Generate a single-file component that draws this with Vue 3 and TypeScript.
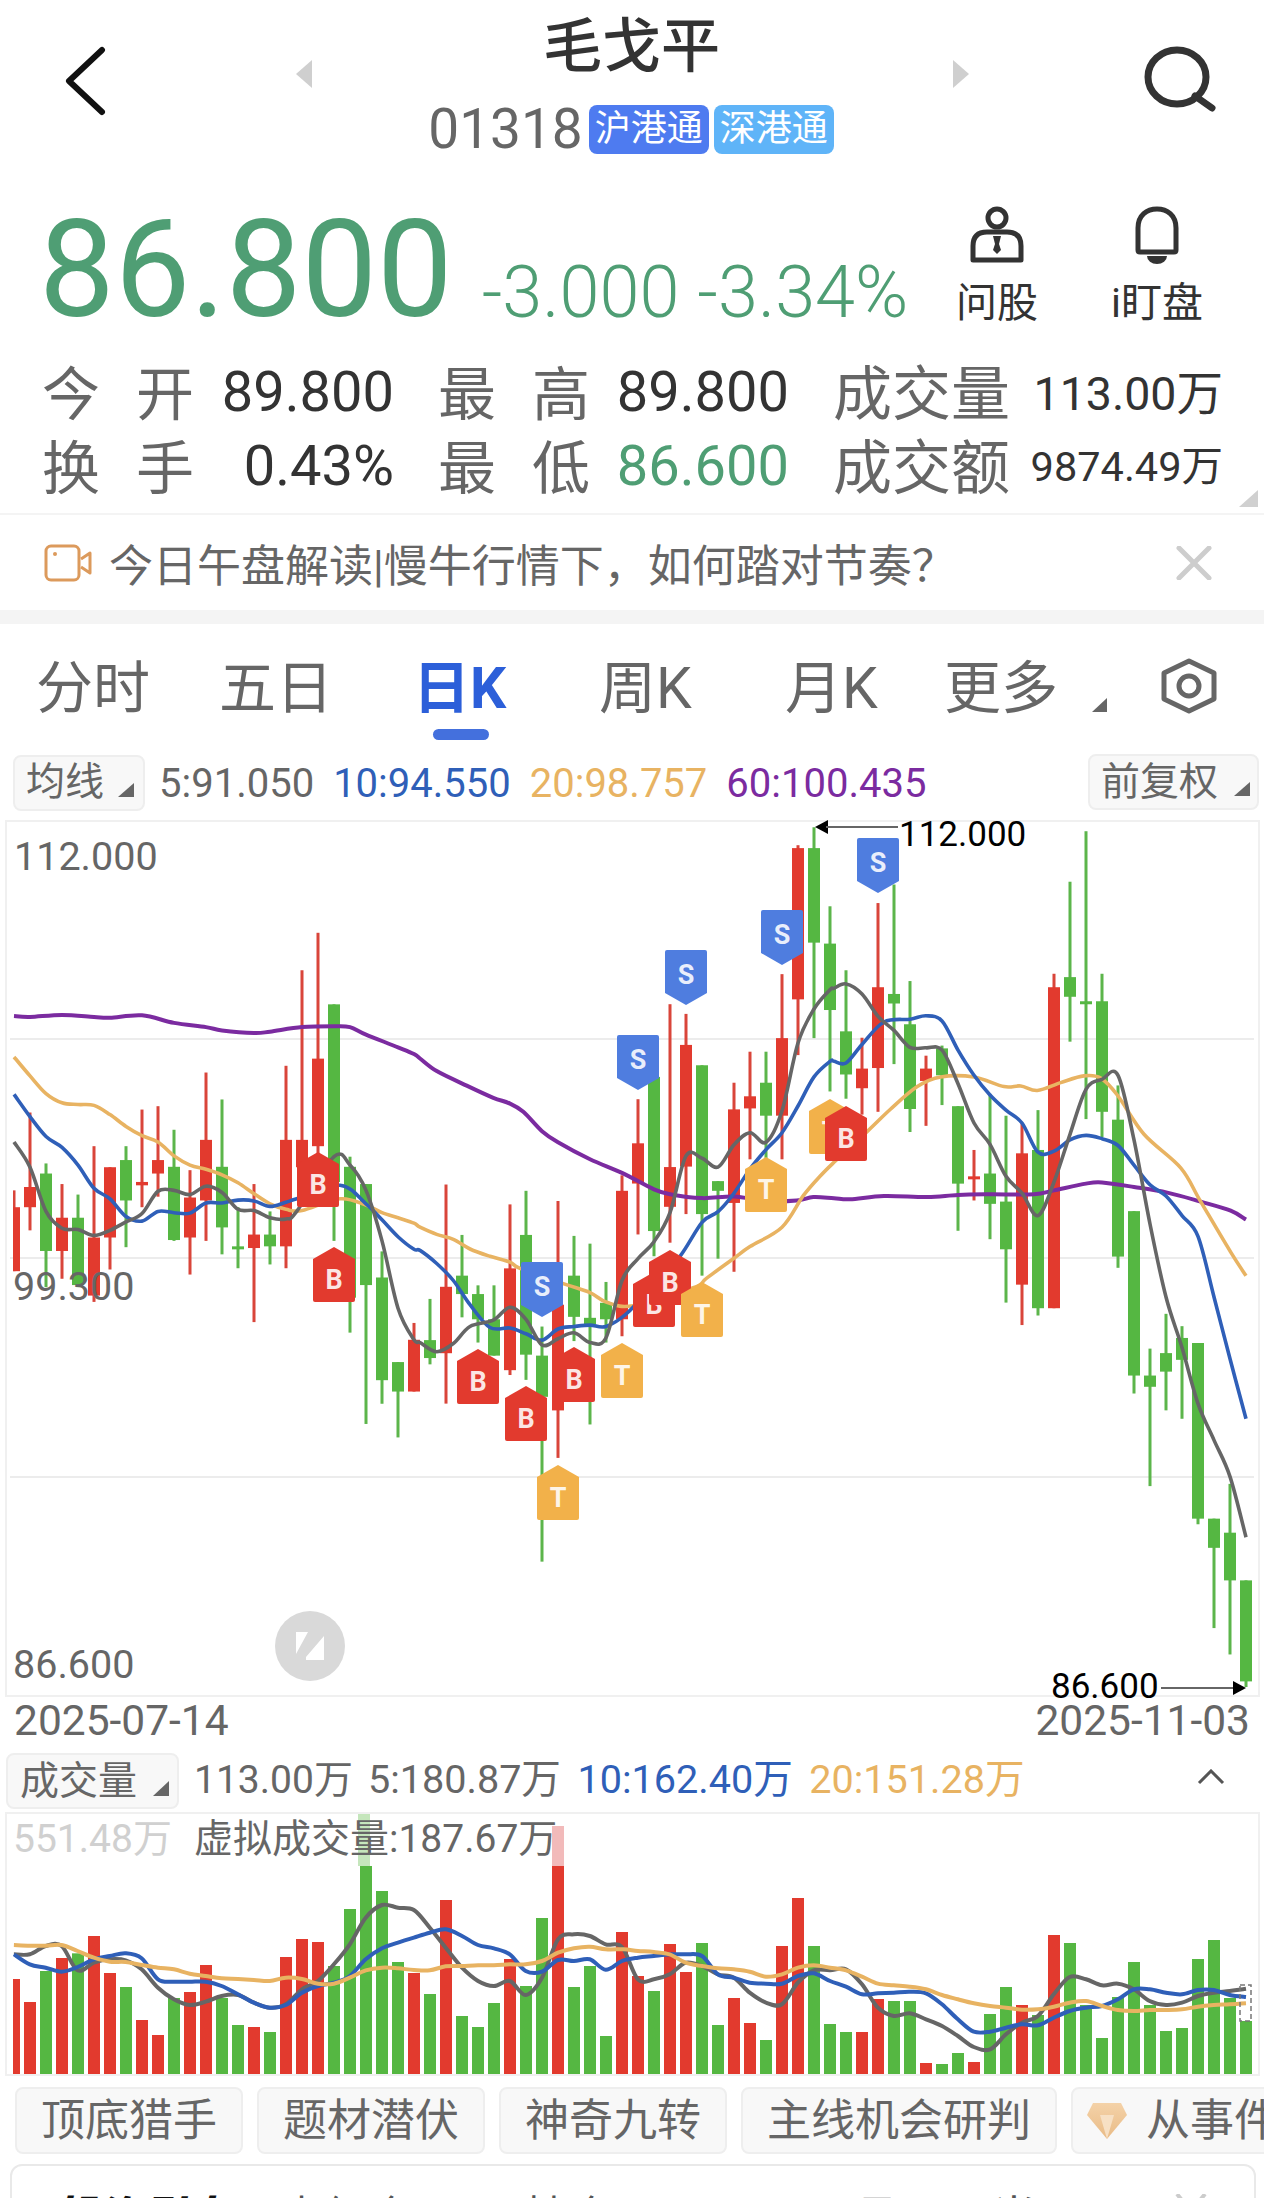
<script setup lang="ts">
type Candle = [number, number, number, number, number]
type P = [number, number]

// hi, body top, body bottom, lo, 1 = green
const rawA: number[][] = [
  [880,920,1072,1072,0],[695,872,920,975,0],[816,840,1024,1110,1],[865,945,1024,1090,0],[890,945,1105,1110,1],
  [775,992,1130,1145,0],[825,825,992,1068,0],[775,808,904,1015,1],[688,860,868,920,0],[680,808,840,895,0],
  [736,824,998,1000,1],[832,897,992,1080,0],[600,760,904,1000,0],[664,824,968,1032,1],[920,1013,1017,1065,1],
  [865,985,1017,1193,0],[930,985,1013,1056,1],[584,760,1013,1065,0],[357,760,825,900,0],[268,567,775,800,0],
  [438,438,860,1000,1],[800,824,1135,1218,1],[865,865,1105,1435,1],[1025,1087,1331,1387,1],[1288,1288,1358,1467,1],
  [1195,1235,1358,1358,0],
]
const rawB: number[][] = [
  [988,1073,1110,1123,1],[752,963,1100,1204,0],[856,940,978,1026,1],[960,978,1030,1078,1],[960,1030,1105,1105,1],
  [793,925,1135,1145,0],[765,856,1103,1155,1],[1045,1105,1190,1530,1],[786,1000,1218,1316,0],[858,940,1025,1075,1],
  [874,1027,1040,1247,1],[953,996,1030,1078,1],[733,765,1030,1065,0],[576,667,750,855,0],[530,530,848,900,1],
  [380,716,798,872,0],[400,464,715,813,0],[506,506,813,940,1],[745,745,765,905,1],[542,597,790,932,0],
  [478,570,595,700,0],[478,542,610,700,1],[318,450,610,700,0],[52,58,370,485,0],[15,58,253,450,1],
  [178,255,392,560,1],[310,436,525,575,1],
]
const rawC: number[][] = [
  [388,443,478,525,0],[148,298,442,520,0],[115,310,327,435,1],[287,364,515,556,1],[420,443,465,545,0],
  [402,407,455,508,1],[510,510,648,732,1],[588,635,640,678,0],[488,630,684,747,1],[527,680,765,860,1],
  [540,594,828,900,0],[517,588,870,883,1],[274,298,870,870,0],[110,280,315,395,1],[20,323,327,533,1],
  [274,323,520,565,1],[473,534,778,798,1],[697,697,990,1022,1],[942,990,1010,1187,1],[880,950,983,1052,1],
  [902,923,962,1067,1],[932,932,1245,1255,1],[1245,1245,1297,1440,1],[1183,1270,1355,1487,1],[1355,1355,1535,1545,1],
]
const sA = 2.376, sB = 2.063, sC = 1.782
const conv = (rows: number[][], s: number): Candle[] =>
  rows.map((r) => [820 + r[0] / s, 820 + r[1] / s, 820 + r[2] / s, 820 + r[3] / s, r[4]] as Candle)
const candles = [...conv(rawA, sA), ...conv(rawB, sB), ...conv(rawC, sC)].map((c, i) => ({
  x: 14 + 16 * i,
  hi: c[0],
  top: c[1],
  h: Math.max(c[2] - c[1], 3),
  lo: c[3],
  color: c[4] ? '#55b742' : '#e23a2e',
  wick: c[4] ? '#5cb54b' : '#d9453a',
}))

function smooth(pts: P[]): string {
  let d = `M${pts[0][0].toFixed(1)} ${pts[0][1].toFixed(1)}`
  for (let i = 0; i < pts.length - 1; i++) {
    const p0 = pts[Math.max(i - 1, 0)]
    const p1 = pts[i]
    const p2 = pts[i + 1]
    const p3 = pts[Math.min(i + 2, pts.length - 1)]
    const c1x = p1[0] + (p2[0] - p0[0]) / 6
    const c1y = p1[1] + (p2[1] - p0[1]) / 6
    const c2x = p2[0] - (p3[0] - p1[0]) / 6
    const c2y = p2[1] - (p3[1] - p1[1]) / 6
    d += `C${c1x.toFixed(1)} ${c1y.toFixed(1)} ${c2x.toFixed(1)} ${c2y.toFixed(1)} ${p2[0].toFixed(1)} ${p2[1].toFixed(1)}`
  }
  return d
}

function priceLine(a: number[], b: number[], c: number[]): string {
  const out: P[] = []
  for (let i = 0; i < a.length; i += 2) if (a[i] / 3 < 420) out.push([a[i] / 3, 820 + a[i + 1] / sA])
  for (let i = 0; i < b.length; i += 2) {
    const x = 420 + b[i] / 3
    if (x >= 420 && x < 834) out.push([x, 820 + b[i + 1] / sB])
  }
  for (let i = 0; i < c.length; i += 2) out.push([834 + c[i] / 3, 820 + c[i + 1] / sC])
  return smooth(out)
}

const ma60 = priceLine(
  [42,466,90,468,186,463,282,468,330,470,426,464,522,482,618,492,666,500,762,506,810,503,906,492,1002,490,1050,492,1098,510,1194,540,1242,556],
  [0,492,50,518,140,548,220,573,270,585,310,602,366,642,414,665,510,700,606,728,702,762,750,772,846,780,942,777,1038,786,1130,785,1180,778],
  [0,674,48,676,150,670,280,672,372,668,468,667,600,667,660,660,756,648,804,646,900,654,1000,664,1100,680,1190,696,1236,712],
)
const ma10 = priceLine(
  [42,652,90,705,138,752,186,778,234,820,282,875,330,900,378,942,426,953,474,930,522,933,570,934,618,910,666,910,714,903,762,905,810,918,858,908,890,900,1020,868,1098,912,1146,950,1194,990,1242,1020],
  [0,888,50,915,100,950,150,1000,210,1047,270,1048,318,1060,366,1073,414,1050,462,1045,510,1042,558,1045,620,1018,700,960,780,900,846,830,894,808,942,770,990,720,1038,680,1086,645,1134,590,1182,530,1230,498],
  [0,430,36,433,84,400,150,360,228,355,276,349,324,358,372,410,420,455,468,490,516,517,564,540,612,592,660,590,708,570,756,562,804,568,852,580,900,615,948,650,996,670,1044,705,1092,742,1140,850,1188,960,1236,1067],
)
const ma20 = priceLine(
  [42,563,90,608,138,650,186,672,234,676,282,678,330,700,378,728,426,750,474,765,522,798,570,820,618,830,666,843,714,862,762,888,810,912,858,925,906,928,1020,900,1098,915,1146,933,1194,945,1242,958],
  [0,840,50,855,100,865,150,885,210,900,270,912,300,925,432,957,510,975,560,995,640,1002,820,965,860,945,940,905,990,880,1086,840,1150,775,1200,735],
  [0,610,100,555,170,515,250,475,320,458,420,458,510,475,560,474,610,482,680,468,750,456,800,460,850,490,930,560,1040,620,1100,680,1190,770,1236,812],
)
const ma5 = priceLine(
  [42,765,90,825,138,930,186,970,234,973,282,987,330,975,378,955,426,935,474,882,522,880,570,890,618,870,666,885,714,925,762,928,810,945,858,948,890,930,1002,800,1050,820,1098,880,1146,1000,1194,1160,1242,1235],
  [0,1078,50,1097,100,1080,150,1045,220,1032,270,1005,318,1030,366,1083,414,1070,462,1058,510,1078,558,1068,606,950,654,905,702,870,750,810,798,693,846,698,894,716,942,670,990,645,1038,665,1086,600,1134,460,1182,390,1230,350],
  [0,300,36,292,84,310,132,350,180,375,228,405,276,406,324,410,372,470,420,540,468,578,516,635,564,665,612,705,660,645,708,560,756,480,804,462,852,455,900,570,948,720,996,850,1044,940,1092,1040,1140,1105,1188,1170,1236,1278],
)
const priceLines = [
  { d: ma60, c: '#7b2ba0', w: 4 },
  { d: ma20, c: '#e8b362', w: 3.6 },
  { d: ma10, c: '#2f5fb8', w: 3.6 },
  { d: ma5, c: '#666666', w: 3.6 },
]

const markers = [
  { k: 'T', x: 830, y: 1099 }, { k: 'B', x: 846, y: 1106 },
  { k: 'B', x: 318, y: 1152 }, { k: 'B', x: 334, y: 1247 },
  { k: 'B', x: 478, y: 1349 }, { k: 'B', x: 526, y: 1386 }, { k: 'B', x: 574, y: 1347 },
  { k: 'T', x: 558, y: 1465 }, { k: 'T', x: 622, y: 1343 },
  { k: 'B', x: 654, y: 1272 }, { k: 'B', x: 670, y: 1250 }, { k: 'T', x: 702, y: 1282 }, { k: 'T', x: 766, y: 1157 },
  { k: 'S', x: 542, y: 1262 }, { k: 'S', x: 638, y: 1035 }, { k: 'S', x: 686, y: 950 },
  { k: 'S', x: 782, y: 910 }, { k: 'S', x: 878, y: 838 },
].map((m) => ({
  ...m,
  fill: m.k === 'S' ? '#4f7ddf' : m.k === 'B' ? '#e23a2e' : '#f2b14a',
  d:
    m.k === 'S'
      ? 'M2 0H40Q42 0 42 2V43L21 55L0 43V2Q0 0 2 0Z'
      : 'M21 0L42 12V53Q42 55 40 55H2Q0 55 0 53V12Z',
  base: m.k === 'S' ? 34 : 42,
}))

const vols = [
  -504,-573,480,-441,427,-375,-486,528,-627,-672,561,-543,-462,561,642,-648,663,-438,-384,-393,465,294,165,240,453,-486,549,-267,615,648,576,-444,525,321,-165,528,465,675,-363,
  -495,540,-399,-483,396,642,-561,-636,687,-405,-261,405,639,663,-663,-564,570,570,-756,759,726,-753,609,528,-582,612,-372,396,582,681,558,453,582,660,651,444,387,561,630,
].map((v, i) => {
  const top = 1810 + Math.abs(v) / 3
  return { x: 8 + 16 * i, y: top, h: 2073 - top, c: v < 0 ? '#e23a2e' : '#55b742' }
})

function volLine(a: number[], b: number[]): string {
  const out: P[] = []
  for (let i = 0; i < a.length; i += 2) {
    const x = a[i] / 2.45
    if (x < 624) out.push([x, 1810 + a[i + 1] / 3])
  }
  for (let i = 0; i < b.length; i += 2) out.push([624 + b[i] / 2.45, 1810 + b[i + 1] / 3])
  return smooth(out)
}
const volLines = [
  {
    c: '#666666',
    d: volLine(
      [34,430,73,430,112,405,151,405,190,478,230,455,269,445,308,448,347,475,387,530,426,565,465,582,504,572,543,555,583,552,622,575,661,590,700,580,740,535,779,510,818,460,857,400,896,320,936,282,975,290,1014,297,1053,350,1092,410,1132,470,1171,510,1210,525,1249,510,1288,552,1328,500,1367,385,1406,370,1445,375,1484,400,1524,408],
      [34,505,73,505,112,490,151,455,191,465,230,490,269,500,308,545,348,575,387,580,426,515,465,478,505,478,544,475,583,520,622,590,661,615,700,607,740,625,779,645,818,675,857,708,897,715,936,670,975,635,1014,615,1053,550,1092,498,1132,505,1171,523,1210,518,1249,535,1288,570,1328,582,1367,575,1406,555,1445,545,1484,540,1524,533],
    ),
  },
  {
    c: '#2f5fb8',
    d: volLine(
      [34,430,73,460,112,470,151,482,190,468,230,445,269,435,308,427,347,442,387,505,426,512,465,512,504,512,543,525,583,550,622,575,661,590,700,582,740,545,779,525,818,515,857,495,896,445,936,412,975,395,1014,380,1053,365,1092,355,1132,375,1171,402,1210,412,1249,430,1288,480,1328,482,1367,447,1406,450,1445,445,1484,476,1524,450],
      [34,440,73,435,112,430,151,430,191,435,230,490,269,500,308,515,348,518,387,518,426,495,465,487,505,510,544,527,583,550,622,547,661,545,700,542,740,547,779,580,818,625,857,662,897,662,936,650,975,640,1014,643,1053,620,1092,600,1132,590,1171,585,1210,565,1249,535,1288,535,1328,545,1367,550,1406,537,1445,537,1484,552,1524,558],
    ),
  },
  {
    c: '#e8b362',
    d: volLine(
      [34,402,73,404,112,404,151,402,190,420,230,440,269,452,308,453,347,462,387,470,426,475,465,488,504,495,543,502,583,504,622,507,661,510,700,500,740,504,779,518,818,518,857,500,896,478,936,470,975,472,1014,477,1053,478,1092,466,1132,465,1171,463,1210,463,1249,460,1288,460,1328,450,1367,425,1406,412,1445,407,1484,415],
      [0,415,34,420,73,423,112,430,151,455,191,465,230,472,269,475,308,482,348,497,387,490,426,470,465,463,505,470,544,478,583,497,622,518,661,523,700,527,740,535,779,552,818,565,857,577,897,585,936,590,975,596,1014,595,1053,587,1092,575,1132,570,1171,585,1210,597,1249,600,1288,597,1328,597,1367,595,1406,587,1445,582,1484,580,1524,577],
    ),
  },
]

const tabs = ['分时', '五日', '日K', '周K', '月K']
const maItems = [
  { t: '5:91.050', c: 'grey' },
  { t: '10:94.550', c: 'blue' },
  { t: '20:98.757', c: 'gold' },
  { t: '60:100.435', c: 'purple' },
]
const tags = ['顶底猎手', '题材潜伏', '神奇九转', '主线机会研判']
</script>

<template>
  <div class="page">
    <header class="head">
      <svg class="back" width="44" height="70" viewBox="0 0 44 70">
        <path d="M38 4L5 35L38 66" fill="none" stroke="#111" stroke-width="6" stroke-linecap="round" stroke-linejoin="round" />
      </svg>
      <svg class="flip" width="16" height="28" viewBox="0 0 16 28"><polygon points="16,0 16,28 0,14" fill="#cfcfcf" /></svg>
      <div class="head-mid">
        <div class="title">毛戈平</div>
        <div class="code-row">
          <span class="code">01318</span>
          <span class="badge b1">沪港通</span>
          <span class="badge b2">深港通</span>
        </div>
      </div>
      <svg class="flip" width="16" height="28" viewBox="0 0 16 28"><polygon points="0,0 0,28 16,14" fill="#cfcfcf" /></svg>
      <svg class="search" width="74" height="66" viewBox="0 0 74 66">
        <ellipse cx="34" cy="31" rx="29" ry="27" fill="none" stroke="#333" stroke-width="7" />
        <path d="M52 50L69 62" stroke="#333" stroke-width="7" stroke-linecap="round" />
      </svg>
    </header>

    <section class="quote">
      <div class="price">86.800</div>
      <div class="change">-3.000</div>
      <div class="change">-3.34%</div>
      <div class="q-actions">
        <div class="q-act">
          <svg width="56" height="58" viewBox="0 0 56 58">
            <circle cx="28" cy="12" r="9" fill="none" stroke="#333" stroke-width="5" />
            <path d="M4 54V40Q4 26 18 26H38Q52 26 52 40V54Z" fill="none" stroke="#333" stroke-width="5" stroke-linejoin="round" />
            <path d="M24 30H32L30 38L32 44L28 48L24 44L26 38Z" fill="#333" />
          </svg>
          <span>问股</span>
        </div>
        <div class="q-act">
          <svg width="48" height="58" viewBox="0 0 48 58">
            <path d="M5 44V22C5 9 14 3 24 3C34 3 43 9 43 22V44Q43 46 41 46H7Q5 46 5 44Z" fill="none" stroke="#333" stroke-width="5" stroke-linejoin="round" />
            <path d="M14 50H34A10 8 0 0 1 14 50Z" fill="#333" />
          </svg>
          <span>i盯盘</span>
        </div>
      </div>
    </section>

    <section class="stats">
      <div class="cell c1"><span class="lbl spaced"><i>今</i><i>开</i></span><b>89.800</b></div>
      <div class="cell c2"><span class="lbl spaced"><i>最</i><i>高</i></span><b>89.800</b></div>
      <div class="cell c3"><span class="lbl wide">成交量</span><b class="sm">113.00万</b></div>
      <div class="cell c1"><span class="lbl spaced"><i>换</i><i>手</i></span><b>0.43%</b></div>
      <div class="cell c2"><span class="lbl spaced"><i>最</i><i>低</i></span><b class="down">86.600</b></div>
      <div class="cell c3"><span class="lbl wide">成交额</span><b class="xs">9874.49万</b></div>
      <svg class="corner" width="19" height="17" viewBox="0 0 19 17"><polygon points="19,0 19,17 0,17" fill="#d0d0d0" /></svg>
    </section>

    <section class="notice">
      <svg width="48" height="38" viewBox="0 0 48 38">
        <rect x="2" y="2" width="33" height="34" rx="5" fill="none" stroke="#dc9a5c" stroke-width="3" />
        <circle cx="11" cy="10" r="2" fill="#dc9a5c" />
        <path d="M37 15L46 9V29L37 23" fill="none" stroke="#dc9a5c" stroke-width="3" stroke-linejoin="round" />
      </svg>
      <span class="notice-text">今日午盘解读|慢牛行情下，如何踏对节奏？</span>
      <svg class="notice-x" width="36" height="34" viewBox="0 0 36 34">
        <path d="M3 2L33 32M33 2L3 32" stroke="#cdcdcd" stroke-width="5" stroke-linecap="round" />
      </svg>
    </section>
    <div class="sep"></div>

    <nav class="tabs">
      <span v-for="t in tabs" :key="t" class="tab" :class="{ on: t === '日K' }">{{ t }}</span>
      <span class="tab more">更多</span>
      <svg class="more-tri" width="15" height="14" viewBox="0 0 15 14"><polygon points="15,0 15,14 0,14" fill="#666" /></svg>
      <svg class="hex" width="58" height="56" viewBox="0 0 58 56">
        <polygon points="29,3 54,15 54,41 29,53 4,41 4,15" fill="none" stroke="#666" stroke-width="5" stroke-linejoin="round" />
        <circle cx="29" cy="28" r="10" fill="none" stroke="#666" stroke-width="5" />
      </svg>
    </nav>

    <div class="ma-row">
      <button class="chip ma-chip">均线<svg width="16" height="14" viewBox="0 0 16 14"><polygon points="16,0 16,14 0,14" fill="#666" /></svg></button>
      <span v-for="m in maItems" :key="m.t" class="ma" :class="m.c">{{ m.t }}</span>
      <button class="chip fq-chip">前复权<svg width="16" height="14" viewBox="0 0 16 14"><polygon points="16,0 16,14 0,14" fill="#666" /></svg></button>
    </div>

    <svg class="kline" width="1264" height="880" viewBox="0 820 1264 880">
      <defs>
        <clipPath id="kclip"><rect x="13" y="820" width="1242" height="876" /></clipPath>
      </defs>
      <rect x="6" y="821" width="1253" height="875" fill="#fff" stroke="#f0f0f0" stroke-width="2" />
      <path d="M10 1039H1254M10 1258H1254M10 1477H1254" stroke="#ececec" stroke-width="2" />
      <g clip-path="url(#kclip)">
        <g v-for="(c, i) in candles" :key="i">
          <rect :x="c.x - 1.5" :y="c.hi" width="3" :height="c.lo - c.hi" :fill="c.wick" />
          <rect :x="c.x - 6" :y="c.top" width="12" :height="c.h" :fill="c.color" />
        </g>
      </g>
      <path v-for="l in priceLines" :key="l.c" :d="l.d" fill="none" :stroke="l.c" :stroke-width="l.w" stroke-linejoin="round" />
      <g v-for="(m, i) in markers" :key="i" :transform="`translate(${m.x - 21} ${m.y})`">
        <path :d="m.d" :fill="m.fill" />
        <text class="mk" x="21" :y="m.base">{{ m.k }}</text>
      </g>
      <text class="ax" x="14" y="870">112.000</text>
      <text class="ax" x="13" y="1300">99.300</text>
      <text class="ax" x="13" y="1678">86.600</text>
      <polygon points="815,827 828,820 828,834" fill="#000" />
      <path d="M826 827H898" stroke="#666" stroke-width="2" />
      <text class="note" x="899" y="846">112.000</text>
      <text class="note" x="1051" y="1698">86.600</text>
      <path d="M1161 1688H1234" stroke="#666" stroke-width="2" />
      <polygon points="1246,1688 1233,1681 1233,1695" fill="#000" />
      <circle cx="310" cy="1646" r="35" fill="#d9d9d9" />
      <path d="M296 1632H308L296 1654ZM324 1660H306V1657L324 1636Z" fill="#fff" />
    </svg>

    <div class="dates"><span>2025-07-14</span><span>2025-11-03</span></div>

    <div class="vol-row">
      <button class="chip vol-chip">成交量<svg width="16" height="15" viewBox="0 0 16 15"><polygon points="16,0 16,15 0,15" fill="#666" /></svg></button>
      <span class="ma grey v1">113.00万</span>
      <span class="ma grey">5:180.87万</span>
      <span class="ma blue">10:162.40万</span>
      <span class="ma gold">20:151.28万</span>
      <svg class="fold" width="28" height="16" viewBox="0 0 28 16"><path d="M2 14L14 2L26 14" fill="none" stroke="#555" stroke-width="3" /></svg>
    </div>

    <svg class="vchart" width="1264" height="264" viewBox="0 1811 1264 264">
      <rect x="6" y="1812" width="1253" height="262" fill="#fff" stroke="#f0f0f0" stroke-width="2" />
      <defs>
        <clipPath id="vclip"><rect x="13" y="1812" width="1242" height="262" /></clipPath>
      </defs>
      <rect x="358" y="1813" width="12" height="52" fill="#c5e6bc" />
      <rect x="552" y="1825" width="12" height="40" fill="#f2baba" />
      <g clip-path="url(#vclip)">
        <rect v-for="(b, i) in vols" :key="i" :x="b.x" :y="b.y" width="12" :height="b.h" :fill="b.c" />
      </g>
      <path v-for="l in volLines" :key="l.c" :d="l.d" fill="none" :stroke="l.c" stroke-width="4" stroke-linejoin="round" />
      <rect x="1240" y="1984" width="11" height="36" fill="none" stroke="#777" stroke-width="1.5" stroke-dasharray="5 3" />
      <text class="vt faint" x="13" y="1851">551.48万</text>
      <text class="vt" x="194" y="1851">虚拟成交量:187.67万</text>
    </svg>

    <div class="tag-row">
      <span v-for="t in tags" :key="t" class="tag">{{ t }}</span>
      <span class="tag last">
        <svg width="40" height="36" viewBox="0 0 40 36">
          <defs>
            <linearGradient id="gem" x1="0" y1="0" x2="0" y2="1">
              <stop offset="0" stop-color="#f4d2a8" />
              <stop offset="1" stop-color="#e9bb86" />
            </linearGradient>
          </defs>
          <polygon points="6,0 34,0 40,12 20,36 0,12" fill="url(#gem)" />
          <polygon points="13,12 27,12 20,36" fill="#f7e0c4" />
        </svg>
        从事件挖掘
      </span>
    </div>

    <section class="card">
      <span class="card-logo">投资引力<i>/</i></span>
      <span class="card-text">虚组合5日，持仓011123，10月31日当日</span>
      <svg class="card-x" width="32" height="10" viewBox="0 0 32 10"><path d="M2 0L10 10M30 0L22 10" stroke="#ccc" stroke-width="4" /></svg>
    </section>
  </div>
</template>

<style>
html, body { margin: 0; background: #fff; }
</style>

<style scoped>
.page {
  width: 1264px;
  height: 2198px;
  overflow: hidden;
  background: #fff;
  font-family: Roboto, "Noto Sans CJK SC", sans-serif;
  color: #666;
}
.head {
  height: 170px;
  display: grid;
  grid-template-columns: 296px 16px 1fr 16px 295px;
  align-items: start;
}
.back { margin: 46px 0 0 64px; }
.flip { margin-top: 60px; }
.search { margin: 46px 0 0 174px; }
.head-mid { display: flex; flex-direction: column; align-items: center; padding-top: 13px; }
.title { font-size: 59px; line-height: 68px; font-weight: 500; color: #333; margin-left: -2px; }
.code-row { display: flex; align-items: center; margin-top: 23px; margin-left: -3px; gap: 0; }
.code { font-size: 55px; line-height: 50px; color: #666; margin-right: 6px; }
.badge {
  height: 49px;
  width: 120px;
  border-radius: 8px;
  color: #fff;
  font-size: 36px;
  line-height: 49px;
  text-align: center;
}
.b1 { background: #4e7bf0; }
.b2 { background: #5fb4f8; margin-left: 5px; }

.quote { height: 185px; display: flex; align-items: flex-start; padding-left: 39px; position: relative; }
.price { font-size: 134.6px; line-height: 150px; color: #4f9e74; margin-top: 25px; white-space: nowrap; }
.change { font-size: 72px; line-height: 80px; color: #4f9e74; font-weight: 300; margin-top: 83px; margin-left: 29px; white-space: nowrap; }
.change + .change { margin-left: 18px; }
.q-actions { position: absolute; left: 0; top: 36px; width: 100%; }
.q-act { position: absolute; display: flex; flex-direction: column; align-items: center; width: 100px; font-size: 41px; line-height: 50px; color: #333; gap: 14px; white-space: nowrap; }
.q-act:nth-child(1) { left: 947px; }
.q-act:nth-child(2) { left: 1107px; }

.stats {
  position: relative;
  height: 158px;
  display: grid;
  grid-template-columns: 352px 351px 390px;
  column-gap: 44px;
  grid-auto-rows: 74px;
  padding-left: 42px;
}
.cell { display: flex; align-items: center; justify-content: space-between; }
.lbl { font-size: 58px; line-height: 74px; color: #666; position: relative; top: 3px; }
.lbl.wide { font-size: 59px; }
.lbl i { font-style: normal; }
.spaced { width: 152px; display: flex; justify-content: space-between; }
.cell b { font-weight: 400; font-size: 56px; color: #333; }
.cell b.sm { font-size: 46.5px; position: relative; top: -3px; }
.cell b.xs { font-size: 41.5px; position: relative; top: -3px; }
.cell b.down { color: #4f9e74; }
.corner { position: absolute; right: 6px; bottom: 6px; }

.notice {
  height: 95px;
  border-top: 2px solid #f4f4f4;
  display: flex;
  align-items: center;
  padding: 0 52px 0 44px;
}
.notice-text { font-size: 44px; color: #666; margin-left: 17px; white-space: nowrap; }
.notice-x { margin-left: auto; }
.sep { height: 14px; background: #f4f4f4; }

.tabs { position: relative; height: 121px; display: flex; align-items: flex-start; padding-top: 29px; box-sizing: border-box; }
.tab { position: absolute; top: 29px; font-size: 57px; line-height: 72px; color: #666; }
.tab:nth-child(1) { left: 36px; }
.tab:nth-child(2) { left: 219px; }
.tab:nth-child(3) { left: 413px; }
.tab:nth-child(4) { left: 599px; }
.tab:nth-child(5) { left: 785px; }
.tab.more { left: 944px; }
.tab.on { color: #2c5fd9; font-weight: 700; }
.tab.on::after {
  content: "";
  position: absolute;
  left: 20px;
  top: 76px;
  width: 56px;
  height: 11px;
  border-radius: 6px;
  background: #4470dd;
}
.more-tri { position: absolute; left: 1092px; top: 74px; }
.hex { position: absolute; left: 1160px; top: 34px; }

.ma-row { height: 75px; position: relative; display: flex; align-items: center; box-sizing: border-box; }
.chip {
  font-family: inherit;
  box-sizing: border-box;
  background: #f8f8f8;
  border: 2px solid #eeeeee;
  border-radius: 8px;
  color: #666;
  font-size: 39px;
  height: 56px;
  padding: 0;
  display: flex;
  align-items: center;
  line-height: 1;
}
.ma-chip { width: 132px; margin: 0 14px 0 13px; padding-left: 11px; }
.ma-chip svg { margin: 14px 0 0 14px; }
.fq-chip { width: 171px; position: absolute; left: 1088px; top: 9px; padding-left: 11px; }
.fq-chip svg { margin: 14px 0 0 16px; }
.ma { font-size: 40px; line-height: 56px; margin-right: 19px; white-space: nowrap; position: relative; top: 1px; }
.grey { color: #666; }
.blue { color: #2f5fb8; }
.gold { color: #e8b362; }
.purple { color: #7b2ba0; }

.kline { display: block; overflow: visible; }
.kline text, .vchart text { font-family: Roboto, "Noto Sans CJK SC", sans-serif; }
.mk { font-size: 27px; font-weight: 700; fill: #fff; fill-opacity: 0.88; text-anchor: middle; }
.ax { font-size: 39.5px; fill: #666; }
.note { font-size: 35px; fill: #000; }

.dates {
  display: flex;
  justify-content: space-between;
  padding: 0 14px;
  font-size: 42.5px;
  line-height: 46px;
  margin-top: -2px;
  height: 52px;
  color: #666;
}

.vol-row { height: 62px; position: relative; display: flex; align-items: center; }
.vol-chip { width: 173px; margin: 0 15px 0 6px; padding-left: 12px; height: 56px; }
.vol-chip svg { margin: 14px 0 0 16px; }
.vol-row .ma { margin-right: 16.5px; font-size: 39.6px; position: relative; top: -1px; }
.vol-row .ma.v1 { font-size: 39px; margin-right: 15px; }
.fold { position: absolute; left: 1197px; top: 19px; }

.vchart { display: block; overflow: hidden; }
.vt { font-size: 39px; fill: #666; }
.faint { fill: #d0d0d0; }

.tag-row { display: flex; gap: 14px; padding: 11px 0 0 15px; height: 78px; box-sizing: border-box; white-space: nowrap; }
.tag {
  box-sizing: border-box;
  flex: none;
  width: 228px;
  height: 67px;
  background: #f8f8f8;
  border: 2px solid #eeeeee;
  border-radius: 8px;
  font-size: 44px;
  line-height: 64px;
  color: #666;
  text-align: center;
}
.tag:nth-child(4) { width: 316px; }
.tag.last { width: 300px; text-align: left; padding-left: 14px; display: flex; align-items: center; gap: 19px; }

.card {
  box-sizing: border-box;
  margin: 10px 8px 0 10px;
  height: 80px;
  border: 2px solid #e9e9e9;
  border-radius: 12px 12px 0 0;
  display: flex;
  align-items: flex-start;
  padding: 16px 0 0 40px;
  white-space: nowrap;
  position: relative;
}
.card-logo { font-size: 44px; font-weight: 900; color: #111; font-style: italic; width: 228px; }
.card-logo i { color: #2c5fd9; }
.card-text { font-size: 44px; color: #555; }
.card-x { position: absolute; left: 1163px; top: 28px; }
</style>
